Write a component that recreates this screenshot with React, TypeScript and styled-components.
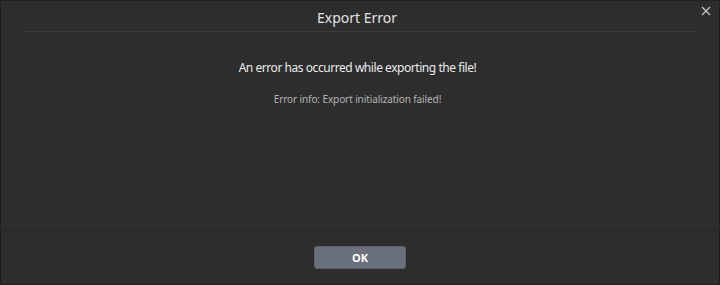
import styled, { createGlobalStyle } from "styled-components";

const GlobalStyle = createGlobalStyle`
  html, body {
    margin: 0;
    padding: 0;
    background: #2d2d2d;
  }
  body {
    font-family: "Noto Sans", "Open Sans", "Liberation Sans", sans-serif;
  }
`;

const App = () => {
  return (
    <>
      <GlobalStyle />
      <Dialog>
        <Header>
          <Title>Export Error</Title>
          <CloseButton aria-label="Close">
            <svg width="10" height="10" viewBox="0 0 10 10">
              <path d="M1 1 L9 9 M9 1 L1 9" stroke="#c8c8c8" strokeWidth="1.2" fill="none" />
            </svg>
          </CloseButton>
        </Header>
        <Body>
          <Message>An error has occurred while exporting the file!</Message>
          <Info>Error info: Export initialization failed!</Info>
        </Body>
        <Footer>
          <OkButton>OK</OkButton>
        </Footer>
      </Dialog>
    </>
  );
};

export default App;

const Dialog = styled.div`
  width: 720px;
  height: 285px;
  box-sizing: border-box;
  border: 1px solid #1f1f1f;
  background: #2d2d2d;
  display: flex;
  flex-direction: column;
`;

const Header = styled.div`
  position: relative;
  height: 30px;
  margin: 0 21px;
  border-bottom: 1px solid #3a3a3a;
  display: flex;
  align-items: center;
  justify-content: center;
`;

const Title = styled.div`
  color: #e2e2e2;
  font-size: 14px;
  padding-top: 3px;
  margin-right: 6px;
`;

const CloseButton = styled.div`
  position: absolute;
  right: -13px;
  top: 5px;
  width: 10px;
  height: 10px;
  display: flex;
`;

const Body = styled.div`
  flex: 1;
  display: flex;
  flex-direction: column;
  align-items: center;
  padding: 27px 5px 0 0;
`;

const Message = styled.div`
  color: #ececec;
  font-size: 12px;
  letter-spacing: -0.45px;
  line-height: 18px;
`;

const Info = styled.div`
  color: #b4b4b4;
  font-size: 10px;
  letter-spacing: -0.1px;
  line-height: 14px;
  margin-top: 15px;
`;

const Footer = styled.div`
  height: 54px;
  border-top: 1px solid #242424;
  display: flex;
  justify-content: center;
  padding-top: 15px;
  box-sizing: border-box;
`;

const OkButton = styled.button`
  width: 92px;
  height: 23px;
  border: 1px solid #5b606a;
  border-radius: 3px;
  background: #6b717c;
  color: #ffffff;
  font-family: "Noto Sans", "Liberation Sans", sans-serif;
  font-size: 11px;
  font-weight: 700;
  padding: 0;
  cursor: pointer;
`;
